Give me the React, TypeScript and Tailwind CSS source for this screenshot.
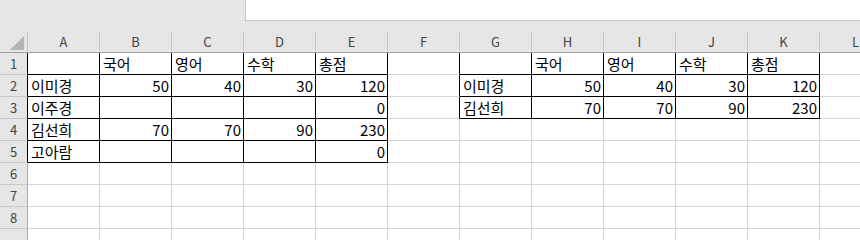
const cols = ["A", "B", "C", "D", "E", "F", "G", "H", "I", "J", "K", "L"];

type Cell = string | number | null;

// row index 1..8, col index 0..11
const data: Record<number, Cell[]> = {
  1: [null, "국어", "영어", "수학", "총점", null, null, "국어", "영어", "수학", "총점"],
  2: ["이미경", 50, 40, 30, 120, null, "이미경", 50, 40, 30, 120],
  3: ["이주경", null, null, null, 0, null, "김선희", 70, 70, 90, 230],
  4: ["김선희", 70, 70, 90, 230],
  5: ["고아람", null, null, null, 0],
};

const inTable = (c: number, r: number) =>
  (c >= 0 && c <= 4 && r >= 1 && r <= 5) || (c >= 6 && c <= 10 && r >= 1 && r <= 3);

function Corner() {
  return (
    <div className="w-[28px] h-[21px] shrink-0 border-r border-b border-r-[#c6c6c6] border-b-[#9f9f9f] flex items-end justify-end pr-[3px] pb-[2px]">
      <svg width="14" height="14" viewBox="0 0 14 14">
        <polygon points="14,0 14,14 0,14" fill="#b4b4b4" />
      </svg>
    </div>
  );
}

function Row({ r }: { r: number }) {
  const vals = data[r] ?? [];
  return (
    <div className="flex h-[22px]">
      <div
        className={
          "w-[28px] shrink-0 bg-[#e6e6e6] border-b border-b-[#c6c6c6] border-r flex items-center justify-center text-[13px] text-[#444] " +
          (inTable(0, r) ? "border-r-black" : "border-r-[#ababab]")
        }
      >
        {r}
      </div>
      {cols.map((_, c) => {
        const v = vals[c];
        const right = inTable(c, r) || inTable(c + 1, r);
        const bottom = inTable(c, r) || inTable(c, r + 1);
        const isNum = typeof v === "number";
        return (
          <div
            key={c}
            className={
              "w-[72px] shrink-0 bg-white border-r border-b flex items-end pb-[1px] text-[15px] text-black leading-[19px] " +
              (right ? "border-r-black " : "border-r-[#d4d4d4] ") +
              (bottom ? "border-b-black " : "border-b-[#d4d4d4] ") +
              (isNum ? "justify-end pr-[2px]" : "justify-start pl-[3px]")
            }
          >
            {v ?? ""}
          </div>
        );
      })}
    </div>
  );
}

export default function App() {
  return (
    <div
      className="w-[860px] h-[240px] overflow-hidden bg-[#e6e6e6]"
      style={{ fontFamily: '"Noto Sans CJK KR", "Noto Sans", sans-serif' }}
    >
      <div className="flex h-[32px]">
        <div className="w-[245px] shrink-0" />
        <div className="flex-1 h-[21px] bg-white border-l border-b border-[#c6c6c6]" />
      </div>
      <div className="flex">
        <Corner />
        {cols.map((l) => (
          <div
            key={l}
            className="w-[72px] h-[21px] shrink-0 border-r border-b border-r-[#c6c6c6] border-b-[#9f9f9f] flex items-center justify-center text-[13px] text-[#444]"
          >
            {l}
          </div>
        ))}
      </div>
      {[1, 2, 3, 4, 5, 6, 7, 8].map((r) => (
        <Row key={r} r={r} />
      ))}
      <div className="flex h-[22px]">
        <div className="w-[28px] shrink-0 border-r border-r-[#ababab]" />
        {cols.map((l) => (
          <div key={l} className="w-[72px] shrink-0 bg-white border-r border-r-[#d4d4d4]" />
        ))}
      </div>
    </div>
  );
}
